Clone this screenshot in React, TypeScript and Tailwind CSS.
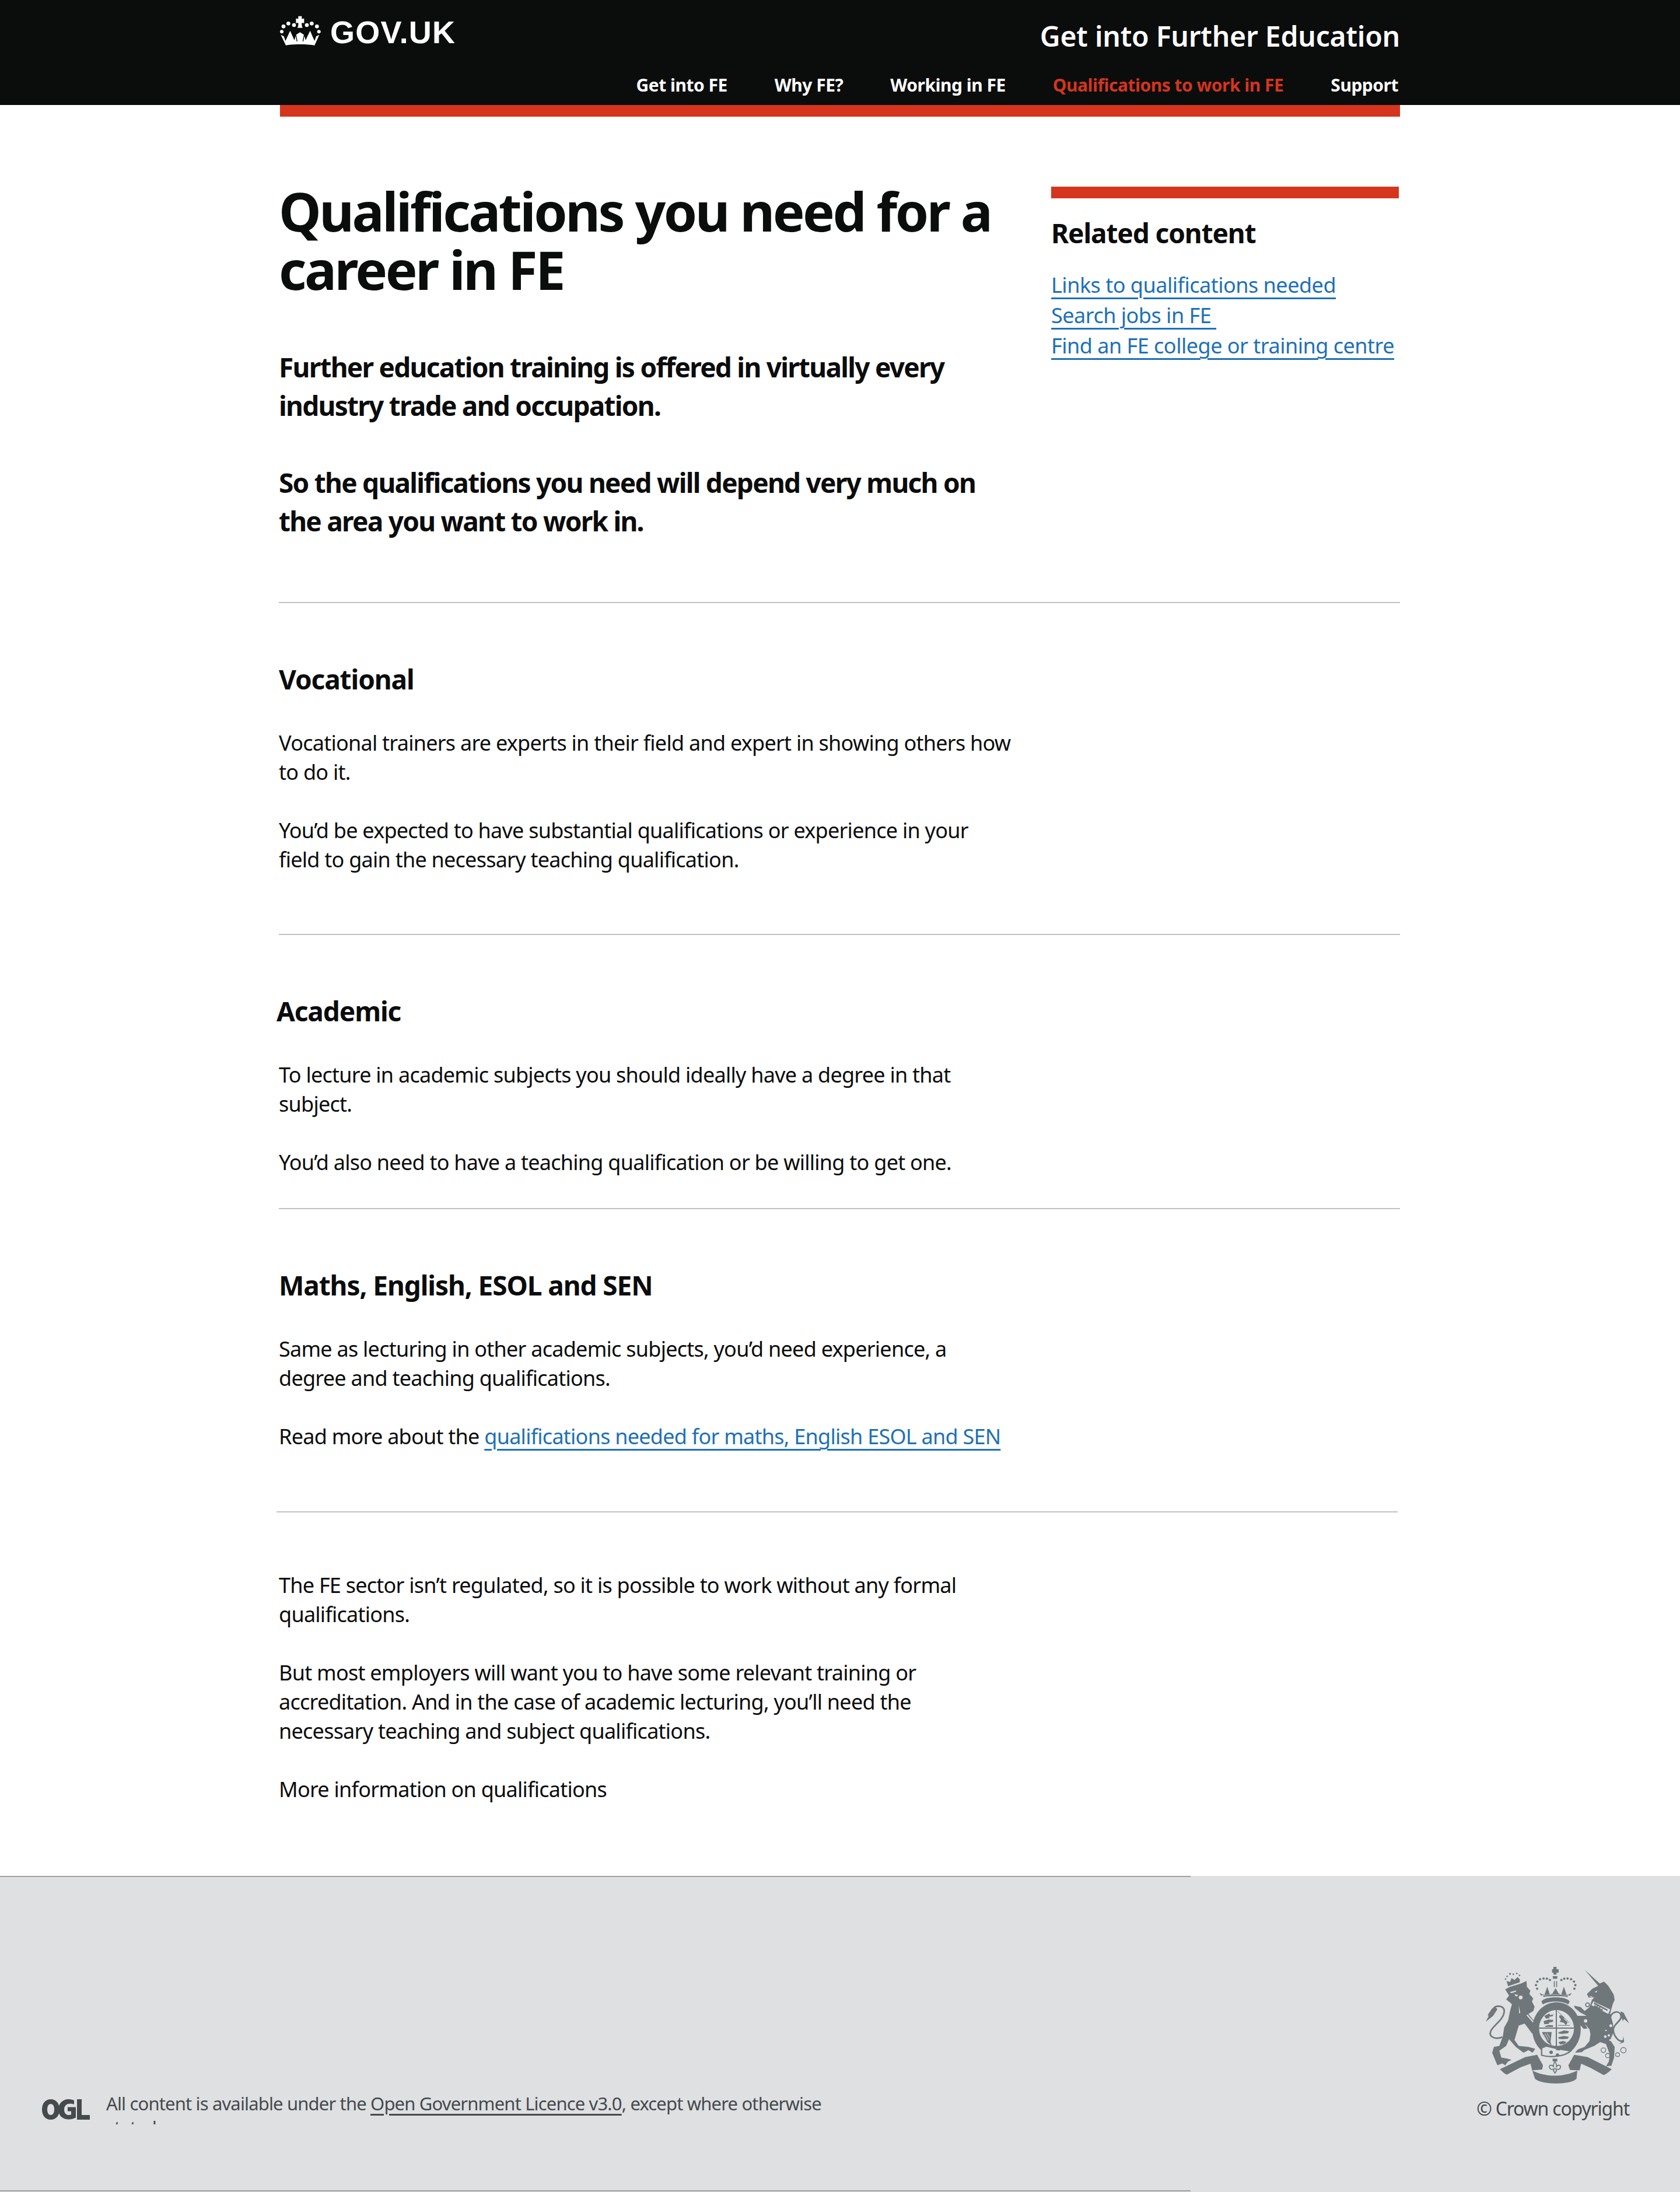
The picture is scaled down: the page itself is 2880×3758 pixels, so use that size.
import React from 'react';

const RED = 'bg-[#d4351c]';
const CREST = '#6f777b';
const FOOTER_BG = '#dee0e2';

const Crown: React.FC = () => (
  <svg className="w-[70px] h-[52px] shrink-0" viewBox="60 20 210 156" fill="#fff">
    <path d="M154 22h18v14l12-2v24l-12-2v14l4 12h-26l4-12V56l-12 2V34l12 2z" />
    <circle cx="78" cy="75" r="10" /><circle cx="103" cy="60" r="10" /><circle cx="132" cy="68" r="10" />
    <circle cx="198" cy="68" r="10" /><circle cx="223" cy="60" r="10" /><circle cx="250" cy="75" r="10" />
    <circle cx="69" cy="102" r="9" /><circle cx="260" cy="102" r="9" />
    <path d="M90 172c40-7 110-7 148 0l24-54-16 8-8 24-10-22-13-31-15 31-8 18-8-28-21-13-21 13-8 28-8-18-14-31-14 31-10 22-8-24-16-8z" />
    <path fill="none" stroke="#0b0c0c" strokeWidth="4" d="M140 112l8 40M186 112l-8 40" />
  </svg>
);

const Crest: React.FC = () => (
  <svg className="w-[246px] h-[202px]" viewBox="80 92 740 608" fill={CREST}>
    {/* lion */}
    <path d="M180 208l25-13 57-17 28-13 2 30 18 20-5 17 20 23-7 15 14 28-7 22-25 15 40 50 12 50-17 10-17-10-18-25-20-25-30 10-22 75 22 30 50 5 35 10-13 20-22-13-25 13-40-30-35-40-15 35-35 25 10 35 30 5 23 7-18 8-15 20-15-10-25 10-15-35-12-30 9-30 28-5 18-50 7-45 20-35 10-50 10-35-30-25 15-20z" />
    <circle cx="260" cy="250" r="10" fill={FOOTER_BG} />
    <path fill={FOOTER_BG} d="M205 222l30-8 2 6-26 8zM228 232l20 6-12 8zM295 338l45 50-6 4-44-50zM250 290l8 40-6 2z" />
    <path fill="none" stroke={CREST} strokeWidth="8" d="M165 455c-40 15-70-5-60-30 10-30 70-60 70-105 0-25-30-30-50-20" />
    <path d="M125 296l15 14-22 35-38 30 15-30-5-5 20-30z" />
    {/* lion's crown */}
    <path d="M195 192l-8-27 18 5 8-20 15 10 17-15 11 13-1 14z" />
    <circle cx="182" cy="155" r="4" /><circle cx="190" cy="141" r="4" /><circle cx="205" cy="128" r="5" /><circle cx="222" cy="130" r="4" /><circle cx="240" cy="126" r="4" /><circle cx="254" cy="136" r="4" />
    {/* royal crown */}
    <path d="M429 92h16v12h11v18h-11v10h-16v-10h-7v-18h7z" />
    <path d="M425 140h25l-2 14h-21z" />
    <circle cx="345" cy="205" r="6" /><circle cx="339" cy="186" r="6" /><circle cx="346" cy="168" r="6" /><circle cx="360" cy="156" r="6" /><circle cx="378" cy="152" r="6" /><circle cx="395" cy="153" r="6" /><circle cx="411" cy="160" r="6" />
    <circle cx="537" cy="205" r="6" /><circle cx="542" cy="186" r="6" /><circle cx="535" cy="168" r="6" /><circle cx="520" cy="156" r="6" /><circle cx="502" cy="152" r="6" /><circle cx="485" cy="153" r="6" /><circle cx="470" cy="160" r="6" />
    <path d="M431 166h5v30h-5zM443 166h5v30h-5z" />
    <path d="M365 240l-8-14 14 8 12 2 14-42 14 42 14-8 15-26 15 26 14 8 14-42 14 42 12-2 14-8-8 14c-40-8-110-8-150 0z" />
    <path d="M367 272c10-30 136-30 146 0l-8 14c-30-20-100-20-130 0zM378 240c30-6 94-6 124 0l2 8c-30-6-98-6-128 0z" />
    {/* garter and shield */}
    <path fillRule="evenodd" d="M445 275c70 0 125 62 125 140 0 50-24 96-62 122l-128-4c-38-26-60-70-60-118 0-78 55-140 125-140zm0 40c-50 0-90 44-90 95 0 48 38 90 90 90s90-42 90-90c0-51-40-95-90-95z" />
    <path d="M441 315h6v186h-6zM355 405h180v6H355z" />
    <path d="M382 345l26-12 4 8 18-4-6 10-18 2 4 8-20 2zM378 372l26-8 24 2-2 10-22 4 4 6-26 2zM384 398l20-6 24 2-2 8H388z" />
    <path d="M462 340l18 8 6 16 16 14-8 16-12-14-20-4 6-12-10-14z" />
    <path fill="none" stroke={CREST} strokeWidth="3" d="M452 322l58 58M452 394h62" />
    <path d="M370 428h50l-6 50 6 20-24-20-18-30z" />
    <path fill="none" stroke={FOOTER_BG} strokeWidth="3" d="M386 436l18 36M396 434l14 26M378 442l18 36" />
    <path d="M455 430l30-10 24 4-4 10-30 4-20-2zM455 455l28-6 26 4-6 10-28 2-20-2zM455 480l24-6 18 6-12 10-22 2z" />
    {/* buckle strap */}
    <path fill={FOOTER_BG} stroke={CREST} strokeWidth="7" d="M368 510l24-10 50 12 16 4 60 10c-30 30-110 35-150 22z" />
    <circle cx="417" cy="533" r="9" /><circle cx="450" cy="547" r="9" />
    <path d="M442 510h20v14l-20-3z" />
    {/* unicorn */}
    <path d="M590 107l78 71 22-10 22 22 28 45 5 27-10 23-13 47 14 53 2 47-16 38 23 35-3 55-14 42-28 3 15-25 5-35-20-55-30-10-30 20-50 20-15 12-35 3 15-17 35-13 25-30 5-35-5-25-25-30 15 25-20 2-15-17-25-20-5-30 60 0-35-20-25-20-5-13 35 8 20 20 25-20 13-38 12-12-30 0-8-18 28-27 30-15z" />
    <path fill={FOOTER_BG} d="M625 290l10-20 87 42-10 23zM640 222l16-8-4 10zM610 240l22 6-4 4z" />
    <path d="M636 298l8-12 4 10 8-6 4 12 10-4 2 12 10-2 2 12zM640 275l70 38-4 6-68-36z" />
    <circle cx="715" cy="446" r="6" fill={FOOTER_BG} /><circle cx="697" cy="452" r="7" fill={FOOTER_BG} /><circle cx="722" cy="470" r="5" fill={FOOTER_BG} /><circle cx="700" cy="420" r="4" fill={FOOTER_BG} />
    <g fill={FOOTER_BG} stroke={CREST} strokeWidth="5">
      <circle cx="605" cy="288" r="10" /><circle cx="595" cy="371" r="11" /><circle cx="725" cy="396" r="10" />
    </g>
    <g fill="none" stroke={CREST} strokeWidth="4">
      <circle cx="687" cy="522" r="12" /><circle cx="709" cy="550" r="11" /><circle cx="760" cy="545" r="10" /><circle cx="790" cy="522" r="14" />
    </g>
    <path fill="none" stroke={CREST} strokeWidth="8" d="M724 350c6-30 50-36 54-4 4 26-40 40-40 70 0 30 30 70 50 56" />
    <path d="M775 322l16 6 28 55-26-22-6 12-8-26z" />
    <path d="M790 450l4 30-26 10 18-16z" />
    {/* ribbon */}
    <path d="M153 620l130-62 62-12 30 54-4 22-52 4-8-34-50 18-72 38c-10-2-26-18-36-28zM730 620l-124-62-70-12-30 54 8 24 50 2 8-34 46 20 70 38c10-2 32-20 42-30z" />
    <path d="M320 628c70 34 160 34 232 0l-4 42c-30 32-180 32-214 0z" />
    {/* fleur de lis */}
    <path d="M425 566h24v14h-24z" />
    <path fill="none" stroke={CREST} strokeWidth="5" d="M437 580c-8 12-10 22-6 30-6-14-28-14-22 2 4 12 16 10 24 6l-4 10 8 12 8-12-4-10c8 4 20 6 24-6 6-16-16-16-22-2 4-8 2-18-6-30z" />
  </svg>
);

const BodyText: React.FC<{ children: React.ReactNode }> = ({ children }) => (
  <p className="whitespace-nowrap text-[36px] leading-[50px] text-[#0b0c0c] ml-[-2px] tracking-[-0.75px]">{children}</p>
);

const SectionHeading: React.FC<{ children: React.ReactNode }> = ({ children }) => (
  <h2 className="text-[46px] leading-[60px] font-bold tracking-[-1.1px] text-[#0b0c0c]">{children}</h2>
);

const Rule: React.FC = () => <div className="h-[2px] w-[1922px] ml-[-2px] bg-[#bfc1c3]" />;

export default function App() {
  return (
    <div className="w-[2880px] h-[3758px] bg-white overflow-hidden flex flex-col font-['Noto_Sans','Liberation_Sans',sans-serif]">
      <header className="h-[180px] shrink-0 bg-[#0b0c0c] text-white">
        <div className="w-[1920px] mx-auto flex justify-between">
          <div className="flex items-start gap-[16px] pt-[27px]">
            <Crown />
            <span className="text-[54px] leading-[54px] font-bold font-['Liberation_Sans',sans-serif] tracking-[1.2px] mt-[1px]">GOV.UK</span>
          </div>
          <div className="flex flex-col items-end">
            <div className="text-[48px] leading-[60px] mt-[32px] font-semibold tracking-[-0.2px]">Get into Further Education</div>
            <nav className="flex gap-[81px] mt-[34px] text-[30px] leading-[40px] font-bold mr-[3px] tracking-[-0.5px]">
              <span>Get into FE</span>
              <span>Why FE?</span>
              <span>Working in FE</span>
              <span className="text-[#d4351c]">Qualifications to work in FE</span>
              <span>Support</span>
            </nav>
          </div>
        </div>
      </header>
      <div className={`w-[1920px] h-[20px] shrink-0 mx-auto ${RED}`} />

      <main className="w-[1920px] mx-auto flex-1">
        <div className="flex justify-between h-[832px]">
          <div className="pt-[112px]">
            <h1 className="text-[92px] leading-[100px] font-bold tracking-[-3.5px] text-[#0b0c0c] ml-[-2px] whitespace-nowrap">Qualifications you need for a<br />career in FE</h1>
            <div className="mt-[84px] ml-[-2px] text-[46px] leading-[66px] font-bold tracking-[-1.75px] text-[#0b0c0c] whitespace-nowrap">
              <p>Further education training is offered in virtually every<br />industry trade and occupation.</p>
              <p className="mt-[66px]">So the qualifications you need will depend very much on<br />the area you want to work in.</p>
            </div>
          </div>
          <aside className="w-[596px] mr-[2px] pt-[120px]">
            <div className={`h-[20px] ${RED}`} />
            <h2 className="text-[46px] leading-[60px] font-bold tracking-[-1.1px] mt-[29px] text-[#0b0c0c]">Related content</h2>
            <ul className="mt-[34px] text-[36px] leading-[52px] text-[#1d70b8] tracking-[-0.5px] whitespace-nowrap">
              <li><a className="underline underline-offset-[8px] decoration-[3px]">Links to qualifications needed</a></li>
              <li><a className="underline underline-offset-[8px] decoration-[3px]">Search jobs in FE&nbsp;</a></li>
              <li><a className="underline underline-offset-[8px] decoration-[3px]">Find an FE college or training centre</a></li>
            </ul>
          </aside>
        </div>
        <Rule />
        <section className="h-[567px] pt-[100px]">
          <div className="ml-[-2px]"><SectionHeading>Vocational</SectionHeading></div>
          <div className="mt-[55px]">
            <BodyText>Vocational trainers are experts in their field and expert in showing others how<br />to do it.</BodyText>
            <div className="mt-[50px]"><BodyText>You’d be expected to have substantial qualifications or experience in your<br />field to gain the necessary teaching qualification.</BodyText></div>
          </div>
        </section>
        <Rule />
        <section className="h-[468px] pt-[100px]">
          <div className="ml-[-6px]"><SectionHeading>Academic</SectionHeading></div>
          <div className="mt-[55px]">
            <BodyText>To lecture in academic subjects you should ideally have a degree in that<br />subject.</BodyText>
            <div className="mt-[50px]"><BodyText>You’d also need to have a teaching qualification or be willing to get one.</BodyText></div>
          </div>
        </section>
        <Rule />
        <section className="h-[518px] pt-[100px]">
          <div className="ml-[-2px]"><SectionHeading>Maths, English, ESOL and SEN</SectionHeading></div>
          <div className="mt-[55px]">
            <BodyText>Same as lecturing in other academic subjects, you’d need experience, a<br />degree and teaching qualifications.</BodyText>
            <div className="mt-[50px]"><BodyText>Read more about the <a className="text-[#1d70b8] underline underline-offset-[8px] decoration-[3px]">qualifications needed for maths, English ESOL and SEN</a></BodyText></div>
          </div>
        </section>
        <div className="h-[2px] w-[1922px] ml-[-6px] bg-[#bfc1c3]" />
        <section className="pt-[100px]">
          <BodyText>The FE sector isn’t regulated, so it is possible to work without any formal<br />qualifications.</BodyText>
          <div className="mt-[50px]"><BodyText>But most employers will want you to have some relevant training or<br />accreditation. And in the case of academic lecturing, you’ll need the<br />necessary teaching and subject qualifications.</BodyText></div>
          <div className="mt-[50px]"><BodyText>More information on qualifications</BodyText></div>
        </section>
      </main>

      <footer className="h-[542px] shrink-0 bg-[#dee0e2] flex flex-col justify-between">
        <div className="h-[2px] w-[2041px] bg-[#a1a1a1]" />
        <div className="flex-1 flex justify-between items-start">
          <div className="mt-[368px] ml-[72px] flex items-start gap-[28px]">
            <svg className="w-[82px] h-[35px] mt-[13px]" viewBox="0 0 82 35" fill="#454a4c">
              <path fillRule="evenodd" d="M15 0c9 0 15 7 15 17.500S24 35 15 35 0 28 0 17.500 6 0 15 0zm0 8c-4 0-6 4-6 9.500s2 9.500 6 9.500 6-4 6-9.500S19 8 15 8z" />
              <path d="M55 9l-2-1c-8-2-15 1-15 9.500 0 7 4 10 9 9.500l3-.5v-6h-6v-7h14v18c-4 2-8 3-12 3-10 0-18-6-18-17C28 6 38-1 47 0c3 0 6 1 8 2z" />
              <path d="M60 0h8v27h14v8H60z" />
            </svg>
            <p className="w-[1240px] h-[56px] overflow-hidden text-[31px] leading-[41px] text-[#454a4c] tracking-[-0.85px]">
              All content is available under the <a className="underline underline-offset-[6px] decoration-[3px]">Open Government Licence v3.0</a>, except where otherwise stated
            </p>
          </div>
          <div className="mt-[154px] mr-[87px] flex flex-col items-end">
            <Crest />
            <span className="mt-[19px] text-[32px] leading-[44px] text-[#454a4c] tracking-[-1.2px]">© Crown copyright</span>
          </div>
        </div>
        <div className="h-[2px] w-[2041px] bg-[#a1a1a1] mb-[1px]" />
      </footer>
    </div>
  );
}
